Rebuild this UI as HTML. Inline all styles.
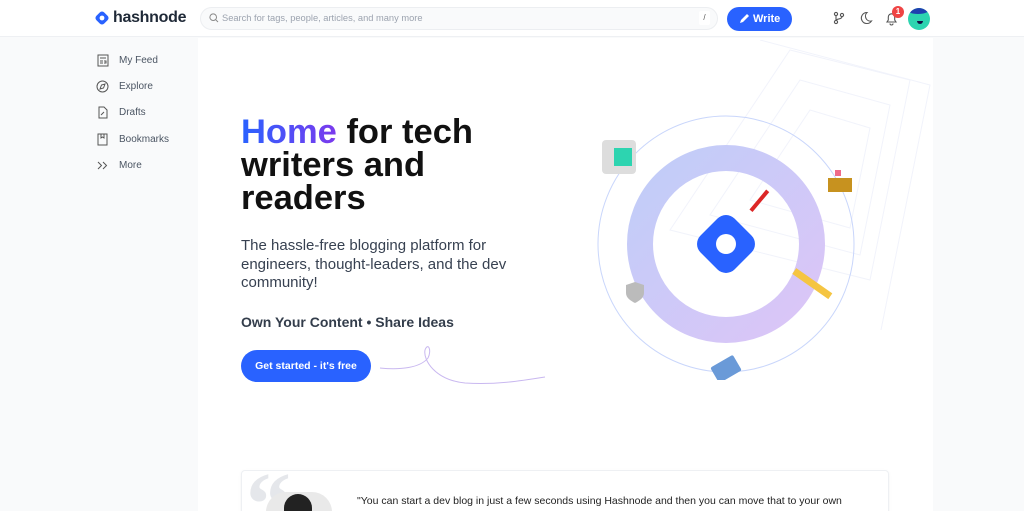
<!DOCTYPE html>
<html><head><style>
*{margin:0;padding:0;box-sizing:border-box}
html{width:1024px;height:511px;overflow:hidden}
body{width:1024px;height:511px;overflow:hidden;background:#f9fafb;font-family:"Liberation Sans",sans-serif;position:relative}
.hdr{position:absolute;left:0;top:0;width:1024px;height:37px;background:#fff;border-bottom:1px solid #eef0f3}
.main{position:absolute;left:198px;top:38px;width:735px;height:473px;background:#fff}
.nav{position:absolute;left:96px;font-size:10px;color:#4b5563}
.nav div{height:26.3px;display:flex;align-items:center}
.nav svg{width:13px;height:13px;margin-right:10px}
h1{position:absolute;left:241px;top:116px;font-size:34.5px;line-height:33px;font-weight:bold;color:#111;letter-spacing:0}
.sub{position:absolute;left:241px;top:237px;font-size:15px;line-height:18.5px;color:#374151;width:300px}
.own{position:absolute;left:241px;top:314px;font-size:14px;font-weight:bold;color:#333d4b}
.btn{position:absolute;left:241px;top:350px;width:130px;height:32px;border-radius:16px;background:#2962ff;color:#fff;font-size:10.5px;font-weight:bold;display:flex;align-items:center;justify-content:center}
.q{position:absolute;left:0;top:460px;width:1024px;height:51px;overflow:hidden}
</style></head><body>
<div class="hdr">
 <svg style="position:absolute;left:94px;top:10px" width="16" height="16" viewBox="0 0 16 16"><rect x="2.5" y="2.5" width="11" height="11" rx="3" transform="rotate(45 8 8)" fill="#2962ff"/><circle cx="8" cy="8" r="2.4" fill="#fff"/></svg>
 <div style="position:absolute;left:113px;top:9px;font-size:16px;font-weight:bold;color:#1f2937;letter-spacing:-0.3px">hashnode</div>
 <div style="position:absolute;left:200px;top:7px;width:518px;height:23px;border-radius:12px;background:#f9fafb;border:1px solid #eceef1"></div>
 <svg style="position:absolute;left:209px;top:13px" width="10" height="10" viewBox="0 0 10 10"><circle cx="4.2" cy="4.2" r="3.3" fill="none" stroke="#888" stroke-width="1"/><path d="M6.7 6.7L9 9" stroke="#888"/></svg>
 <div style="position:absolute;left:222px;top:13px;font-size:9.3px;color:#9ca3af">Search for tags, people, articles, and many more</div>
 <div style="position:absolute;left:699px;top:11px;width:11px;height:14px;background:#fff;border-radius:2px;font-size:8px;color:#555;text-align:center;line-height:14px">/</div>
 <div style="position:absolute;left:727px;top:7px;width:65px;height:24px;border-radius:12px;background:#2962ff;color:#fff;font-size:11px;font-weight:bold;line-height:24px;padding-left:26px">Write</div>
 <svg style="position:absolute;left:739px;top:13px" width="11" height="11" viewBox="0 0 11 11"><path d="M1 10l1-3 6-6 2 2-6 6z" fill="#fff"/></svg>
 <svg style="position:absolute;left:833px;top:11px" width="12" height="14" viewBox="0 0 12 14" fill="none" stroke="#555" stroke-width="1.1"><circle cx="3" cy="3" r="1.6"/><circle cx="3" cy="11" r="1.6"/><circle cx="9" cy="4" r="1.6"/><path d="M3 4.6v4.8M9 5.6c0 3-6 2-6 3.8"/></svg>
 <svg style="position:absolute;left:859px;top:11px" width="14" height="14" viewBox="0 0 14 14"><path d="M8 1.5a5.5 5.5 0 1 0 4.5 8.5A5 5 0 0 1 8 1.5z" fill="none" stroke="#555" stroke-width="1.1"/></svg>
 <svg style="position:absolute;left:885px;top:11px" width="13" height="15" viewBox="0 0 13 15"><path d="M2 11h9l-1.3-2V6a3.2 3.2 0 0 0-6.4 0v3z M5 12.5a1.5 1.5 0 0 0 3 0" fill="none" stroke="#555" stroke-width="1.1"/></svg>
 <div style="position:absolute;left:892px;top:6px;width:12px;height:12px;border-radius:6px;background:#ef4444;color:#fff;font-size:8px;font-weight:bold;text-align:center;line-height:12px">1</div>
 <div style="position:absolute;left:908px;top:8px;width:22px;height:22px;border-radius:11px;background:#2dd4b0;overflow:hidden"><div style="position:absolute;left:-2px;top:-4px;width:24px;height:10px;border-radius:50%;background:#1e40af"></div><div style="position:absolute;left:9px;top:13px;width:6px;height:3px;border-radius:0 0 3px 3px;background:#114"></div></div>
</div>
<div class="nav" style="top:47px">
 <div><svg viewBox="0 0 13 13" fill="none" stroke="#555"><rect x="2" y="1" width="10" height="11"/><path d="M4 4h6M4 7h3M4 9h3M8 7h2v2H8"/></svg>My Feed</div>
 <div><svg viewBox="0 0 13 13" fill="none" stroke="#555"><circle cx="6.5" cy="6.5" r="5.5"/><path d="M4 9l1.5-4L9 4 7.5 8z"/></svg>Explore</div>
 <div><svg viewBox="0 0 13 13" fill="none" stroke="#555"><path d="M3 1h5l3 3v8H3z M5 9l3-3"/></svg>Drafts</div>
 <div><svg viewBox="0 0 13 13" fill="none" stroke="#555"><rect x="2" y="1" width="9" height="11"/><path d="M5 1v4l1.5-1L8 5V1"/></svg>Bookmarks</div>
 <div><svg viewBox="0 0 13 13" fill="none" stroke="#555"><path d="M2 3l3.5 3.5L2 10M7 3l3.5 3.5L7 10"/></svg>More</div>
</div>
<div class="main"></div>
<svg style="position:absolute;left:640px;top:40px" width="293" height="290" viewBox="0 0 293 290" fill="none" stroke="#f1f3fb" stroke-width="1">
 <path d="M150 10l120 30-40 200-200-50z"/>
 <path d="M160 40l90 25-30 150-150-40z"/>
 <path d="M170 70l60 18-20 100-100-28z"/>
 <path d="M120 0l170 45-50 250"/>
</svg>
<h1><span style="background:linear-gradient(90deg,#2962ff,#7c3aed);-webkit-background-clip:text;color:transparent">Home</span> for tech<br>writers and<br>readers</h1>
<div class="sub">The hassle-free blogging platform for engineers, thought-leaders, and the dev community!</div>
<div class="own">Own Your Content • Share Ideas</div>
<div class="btn">Get started - it's free</div>
<svg style="position:absolute;left:370px;top:338px" width="180" height="55" viewBox="0 0 180 55" fill="none" stroke-width="1"><path d="M10 30c20 2 40 0 48-10 4-8 0-16-3-8-2 10 10 30 40 33 30 2 55-2 80-6" stroke="#c9b8f0"/></svg>
<svg style="position:absolute;left:590px;top:110px" width="270" height="270" viewBox="0 0 270 270">
 <defs><linearGradient id="g" x1="0" y1="0" x2="1" y2="1"><stop offset="0" stop-color="#c0cdf8"/><stop offset="1" stop-color="#dcc5f7"/></linearGradient></defs>
 <circle cx="136" cy="134" r="128" fill="none" stroke="#c9d6fb" stroke-width="1"/>
 <circle cx="136" cy="134" r="86" fill="none" stroke="url(#g)" stroke-width="26"/>
 <rect x="112" y="110" width="48" height="48" rx="12" transform="rotate(45 136 134)" fill="#2962ff"/>
 <circle cx="136" cy="134" r="10" fill="#fff"/>
 <rect x="12" y="30" width="34" height="34" rx="4" fill="#ddd"/><rect x="24" y="38" width="18" height="18" fill="#2dd4b0"/>
 <rect x="168" y="78" width="4" height="26" transform="rotate(40 170 90)" fill="#dc2626"/>
 <rect x="238" y="68" width="24" height="14" fill="#c7921f"/><rect x="245" y="60" width="6" height="6" fill="#ef6b8a"/>
 <rect x="200" y="170" width="44" height="7" transform="rotate(35 222 174)" fill="#f5c542"/>
 <path d="M45 172l9 3v8c0 5-5 8-9 10-4-2-9-5-9-10v-8z" fill="#bbb"/>
 <rect x="123" y="250" width="26" height="18" rx="2" transform="rotate(-30 136 259)" fill="#6a9ad8"/>
</svg>
<div class="q">
<div style="position:absolute;left:241px;top:10px;width:648px;height:50px;background:#fff;border:1px solid #eef0f3;border-radius:4px;box-shadow:0 1px 3px rgba(0,0,0,.05)"></div>
<div style="position:absolute;left:246px;top:0;font-size:90px;font-weight:bold;color:#e5e7eb;font-family:'Liberation Serif',serif;line-height:90px">“</div>
<div style="position:absolute;left:266px;top:32px;width:66px;height:40px;border-radius:33px;background:#e9e9e9"></div>
<div style="position:absolute;left:284px;top:34px;width:28px;height:30px;border-radius:14px;background:#222"></div>
<div style="position:absolute;left:357px;top:35px;font-size:10.5px;color:#222">"You can start a dev blog in just a few seconds using Hashnode and then you can move that to your own</div>
</div>
</body></html>
